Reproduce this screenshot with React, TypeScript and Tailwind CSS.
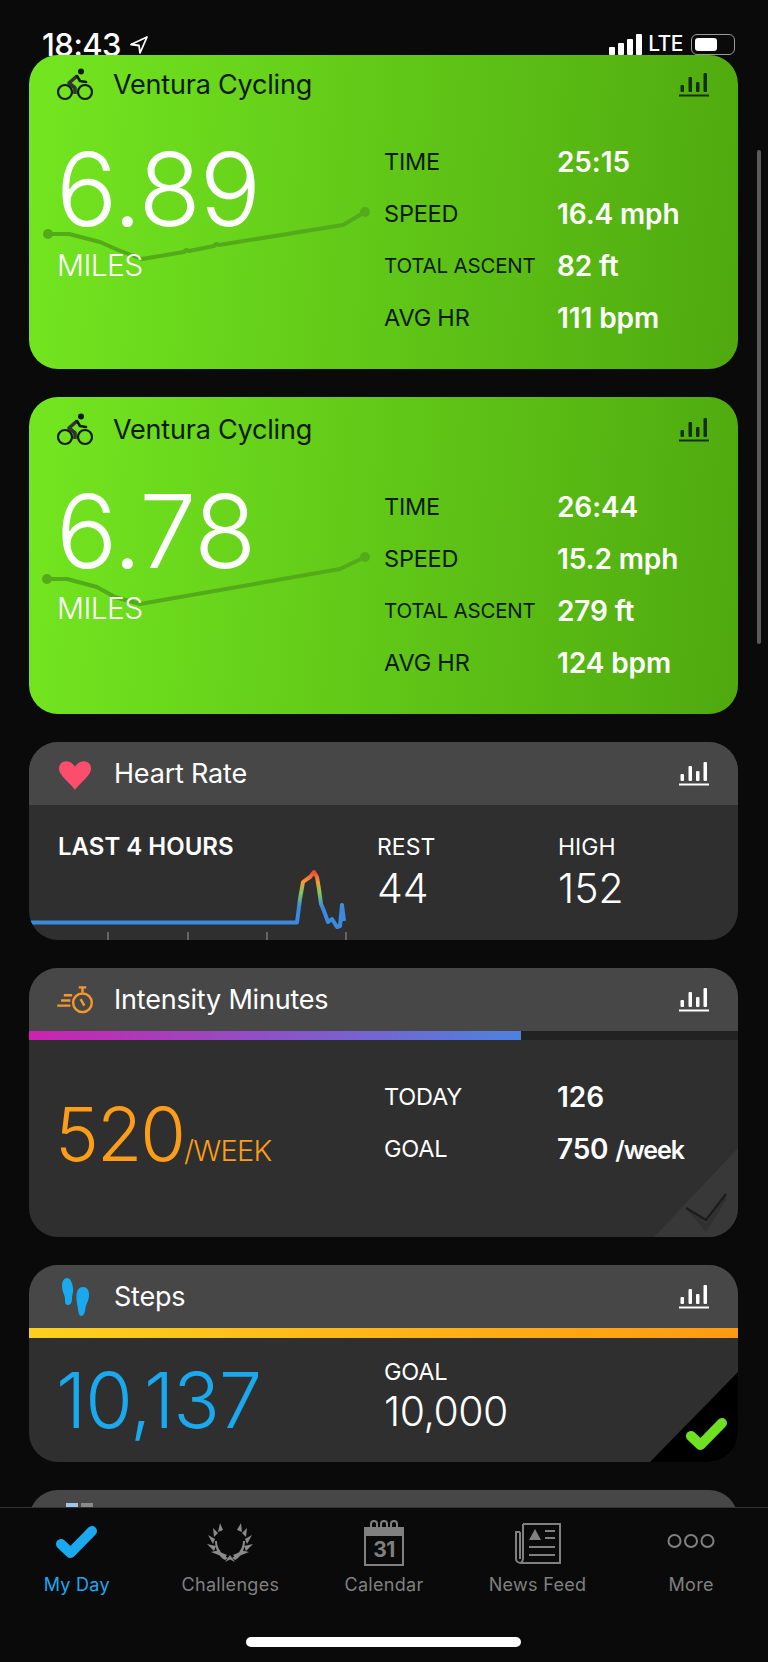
import React from 'react'

// ── Icons ────────────────────────────────────────────────
function ChartIcon({ color = '#fff' }: { color?: string }) {
  return (
    <svg width="30" height="25" viewBox="0 0 30 25" fill={color}>
      <rect x="1.500" y="13" width="3.500" height="7" rx="1" />
      <rect x="9.500" y="5" width="3.500" height="15" rx="1" />
      <rect x="17" y="10" width="3.500" height="10" rx="1" />
      <rect x="24.500" y="1" width="3.500" height="19" rx="1" />
      <rect x="0" y="22.500" width="30" height="2" />
    </svg>
  )
}

function BikeIcon() {
  return (
    <svg width="38" height="33" viewBox="0 0 38 33" fill="none">
      <circle cx="9" cy="24" r="7" stroke="#0c1a05" strokeWidth="2.200" />
      <circle cx="29" cy="24" r="7" stroke="#0c1a05" strokeWidth="2.200" />
      <circle cx="25" cy="3.500" r="3" fill="#0c1a05" />
      <path d="M21 8 L13 15 L19 20 L19 26" stroke="#333" strokeWidth="3.600" strokeLinejoin="round" fill="none" />
      <path d="M21 8 L24 13 L30 14" stroke="#0c1a05" strokeWidth="2.600" strokeLinecap="round" strokeLinejoin="round" fill="none" />
    </svg>
  )
}

function HeartIcon() {
  return (
    <svg width="34" height="29" viewBox="0 0 36 30" fill="#fd4d6d" className="translate-y-[2px]">
      <path d="M18 30 C12 22 1 15 1 7.500 C1 3 4.500 0 8.500 0 C12.500 0 16 2 18 6 C20 2 23.500 0 27.500 0 C31.500 0 35 3 35 7.500 C35 15 24 22 18 30 Z" />
    </svg>
  )
}

function StopwatchIcon() {
  return (
    <svg width="38" height="28" viewBox="0 0 40 30" fill="none" stroke="#f4992a" strokeWidth="2.600">
      <circle cx="28" cy="18" r="10" />
      <path d="M24 1.500 H32 M28 1.500 V7 M26 14 L30 21" />
      <path d="M8 10 H17 M5 15.500 H15 M1 21 H15" />
    </svg>
  )
}

function StepsIcon() {
  return (
    <svg width="30" height="38" viewBox="0 0 30 38" fill="#1aa9ee">
      <path d="M7 0 C10.500 0 12.500 5 13 10 C13.500 15 12 17 12 20 C12 25 10.500 27 8 27 C5 27 5 24 5 21 C5 17 2 14 2 8 C2 3 4 0 7 0 Z" />
      <path d="M23 9 C27 9 29 12 29 17 C29 23 26 26 25.500 30 C25 35 23.500 38 21.500 38 C19 38 18.500 35 18 31 C17.500 27 16 23 16.500 17 C17 12 19 9 23 9 Z" />
    </svg>
  )
}

function CheckIcon({ color }: { color: string }) {
  return (
    <svg width="43" height="34" viewBox="0 0 43 34" fill="none">
      <path d="M6 19 L15.500 28 L37 6" stroke={color} strokeWidth="10" strokeLinecap="round" strokeLinejoin="round" />
    </svg>
  )
}

function LaurelIcon() {
  return (
    <svg width="48" height="40" viewBox="0 0 48 40" fill="#8a8a8a">
      <path d="M14 1 L17 8 L12 10 Z M35 1 L31 8 L36 10 Z" />
      <path d="M7 6 L12 11 L8 15 Z M41 6 L36 11 L40 15 Z" />
      <path d="M2 13 L9 17 L7 22 Z M46 13 L39 17 L41 22 Z" />
      <path d="M1 22 L10 24 L8 29 Z M47 22 L38 24 L40 29 Z" />
      <path d="M5 30 L14 28 L15 34 Z M43 30 L34 28 L33 34 Z" />
      <path d="M11 19 C11 27 16 33 22 36 L19 38 C13 35 9 27 9 19 Z M37 19 C37 27 32 33 26 36 L29 38 C35 35 39 27 39 19 Z" />
      <path d="M24 33 L29 40 L24 37.500 L19 40 Z" />
      <path d="M14 30 L21 33 L18 37 Z M34 30 L27 33 L30 37 Z" />
    </svg>
  )
}

function CalendarIcon() {
  return (
    <svg width="40" height="46" viewBox="0 0 40 46" fill="none">
      <rect x="1" y="8" width="38" height="37" stroke="#808080" strokeWidth="2" />
      <rect x="1" y="9" width="38" height="7" fill="#808080" />
      <path d="M7 10 V4 A3 3 0 0 1 13 4 V10 M17 10 V4 A3 3 0 0 1 23 4 V10 M27 10 V4 A3 3 0 0 1 33 4 V10" stroke="#808080" strokeWidth="2" />
    </svg>
  )
}

function NewsIcon() {
  return (
    <svg width="46" height="41" viewBox="0 0 46 41" fill="none" stroke="#808080" strokeWidth="2">
      <path d="M8 1 H45 V40 H6 C3 40 1 38 1 36 V9 H5" />
      <path d="M5 9 V36 M8 1 V36 C8 38 7 39 6 40" />
      <path d="M20 6 L26 17 H14 Z" fill="#808080" stroke="none" />
      <path d="M30 8 H40 M30 15 H40 M14 24 H40 M14 32 H40" />
    </svg>
  )
}

function MoreIcon() {
  return (
    <svg width="48" height="14" viewBox="0 0 48 14" fill="none" stroke="#808080" strokeWidth="2">
      <circle cx="7.500" cy="7" r="6" />
      <circle cx="24" cy="7" r="6" />
      <circle cx="40.500" cy="7" r="6" />
    </svg>
  )
}

// ── Shared bits ──────────────────────────────────────────
function ActivityCard({
  distance,
  stats,
  route,
  dots,
  heightClass,
  headerClass,
  bodyClass,
  milesClass,
  statsClass,
}: {
  distance: string
  stats: [string, string][]
  route: string
  dots: [number, number][]
  heightClass: string
  headerClass: string
  bodyClass: string
  milesClass: string
  statsClass: string
}) {
  return (
    <div className={`relative overflow-hidden rounded-[29px] bg-[linear-gradient(95deg,#73e620,#4fa90f)] ${heightClass}`}>
      <svg className="pointer-events-none absolute left-0 top-0" width="709" height="317" fill="none">
        <path d={route} stroke="#53ab19" strokeWidth="4" strokeLinejoin="round" strokeLinecap="round" />
        {dots.map(([x, y]) => (
          <circle key={x} cx={x} cy={y} r="5" fill="#53ab19" />
        ))}
      </svg>
      <div className={`relative flex items-center justify-between pl-[27px] pr-[29px] ${headerClass}`}>
        <div className="flex items-center gap-[19px]">
          <BikeIcon />
          <span className="text-[27px] leading-none tracking-[-0.2px] text-[#0c1a05]">Ventura Cycling</span>
        </div>
        <ChartIcon color="#14300a" />
      </div>
      <div className={`relative flex ${bodyClass}`}>
        <div className="w-[355px] pl-[27px] text-white">
          <div className="text-[102px] font-light leading-[116px] tracking-[-1px]">{distance}</div>
          <div className={`pl-[1px] text-[30px] font-light leading-[34px] tracking-[-0.6px] ${milesClass}`}>MILES</div>
        </div>
        <div className={`flex flex-col ${statsClass}`}>
          {stats.map(([label, value]) => (
            <div key={label} className="flex h-[52px] items-center">
              <span className={`w-[173px] tracking-[-0.2px] text-[#0c1a05] ${label === 'TOTAL ASCENT' ? 'text-[20.500px]' : 'text-[23.500px]'}`}>
                {label}
              </span>
              <span className="text-[28px] font-semibold tracking-[-0.1px] text-white">{value}</span>
            </div>
          ))}
        </div>
      </div>
    </div>
  )
}

function CardHeader({ icon, title }: { icon: React.ReactNode; title: string }) {
  return (
    <div className="flex h-[63px] items-center justify-between bg-[#474747] pr-[29px]">
      <div className="flex items-center">
        <div className="flex w-[85px] justify-center pl-[7px]">{icon}</div>
        <span className="text-[27px] leading-none tracking-[-0.2px] text-white">{title}</span>
      </div>
      <ChartIcon />
    </div>
  )
}

function Tab({ icon, label, iconClass, active }: { icon: React.ReactNode; label: string; iconClass: string; active?: boolean }) {
  return (
    <div className="flex w-[153.600px] flex-col items-center">
      <div className={`flex h-[50px] items-end justify-center ${iconClass}`}>{icon}</div>
      <span className={`mt-[8px] text-[18px] leading-[22px] tracking-[0.3px] ${active ? 'text-[#1aa9ee]' : 'text-[#808080]'}`}>
        {label}
      </span>
    </div>
  )
}

export default function App() {
  return (
    <div className="relative flex h-[1662px] w-[768px] flex-col overflow-hidden bg-[#0a0a0b] font-[Inter,sans-serif]">
      <div className="min-h-0 flex-1 overflow-hidden">
        {/* Статус-бар */}
        <div className="flex h-[55px] items-end justify-between pl-[42px] pr-[33px]">
          <div className="flex translate-y-[5px] items-center gap-[8px] text-white">
            <span className="text-[31px] font-medium leading-[30px] tracking-[-0.5px]">18:43</span>
            <svg width="20" height="20" viewBox="0 0 20 20" fill="none" stroke="#fff" strokeWidth="1.800" strokeLinejoin="round">
              <path d="M18 2 L2 9.500 L10 10.500 L11 18 Z" />
            </svg>
          </div>
          <div className="flex items-end gap-[6px]">
            <div className="flex items-end gap-[3px]">
              <div className="h-[8px] w-[6px] rounded-[1px] bg-white" />
              <div className="h-[12px] w-[6px] rounded-[1px] bg-white" />
              <div className="h-[16px] w-[6px] rounded-[1px] bg-white" />
              <div className="h-[21px] w-[6px] rounded-[1px] bg-white" />
            </div>
            <span className="text-[21px] font-medium leading-[23px] tracking-[-0.5px] text-white">LTE</span>
            <div className="ml-[2px] flex h-[21px] w-[44px] items-center rounded-[6px] border border-[#9a9a9a] p-[3px]">
              <div className="h-full w-[22px] rounded-[3px] bg-white" />
            </div>
          </div>
        </div>

        <div className="flex flex-col gap-[28px] pl-[29px] pr-[30px]">
          <ActivityCard
            heightClass="h-[314px]"
            headerClass="h-[59px]"
            bodyClass="pt-[17px]"
            milesClass="mt-[1px]"
            statsClass="pt-[5px]"
            distance="6.89"
            stats={[
              ['TIME', '25:15'],
              ['SPEED', '16.4 mph'],
              ['TOTAL ASCENT', '82 ft'],
              ['AVG HR', '111 bpm'],
            ]}
            route="M19 179 L40 179 L71 187 L89 195 L113 204 L155 197 L157 195 L160 196 L185 191 L187 189 L190 190 L314 170 L336 157"
            dots={[[19, 179], [336, 157]]}
          />
          <ActivityCard
            heightClass="h-[317px]"
            headerClass="h-[64px]"
            bodyClass="pt-[12px]"
            milesClass="mt-[2px]"
            statsClass="pt-[8px]"
            distance="6.78"
            stats={[
              ['TIME', '26:44'],
              ['SPEED', '15.2 mph'],
              ['TOTAL ASCENT', '279 ft'],
              ['AVG HR', '124 bpm'],
            ]}
            route="M18 182 L38 182 L68 190 L86 200 L111 207 L311 172 L336 160"
            dots={[[18, 182], [336, 160]]}
          />

          {/* Heart Rate */}
          <div className="relative h-[198px] overflow-hidden rounded-[29px] bg-[#2f2f2f]">
            <CardHeader icon={<HeartIcon />} title="Heart Rate" />
            <div className="flex pt-[24px]">
              <div className="w-[348px] pl-[29px] text-[24px] font-semibold leading-[36px] text-white">LAST 4 HOURS</div>
              <div className="w-[181px]">
                <div className="text-[23px] leading-[36px] text-white">REST</div>
                <div className="text-[41px] font-light leading-[46px] text-white">44</div>
              </div>
              <div>
                <div className="text-[23px] leading-[36px] text-white">HIGH</div>
                <div className="text-[41px] font-light leading-[46px] text-white">152</div>
              </div>
            </div>
            <svg className="absolute left-0 top-0" width="709" height="198" fill="none">
              <defs>
                <linearGradient id="hr" gradientUnits="userSpaceOnUse" x1="0" y1="130" x2="0" y2="180">
                  <stop offset="0" stopColor="#ef4a35" />
                  <stop offset="0.2" stopColor="#f59a35" />
                  <stop offset="0.42" stopColor="#7fc95a" />
                  <stop offset="0.7" stopColor="#3a8ade" />
                  <stop offset="1" stopColor="#3a8ade" />
                </linearGradient>
              </defs>
              <path
                d="M0 180.500 L268 180.500 L271 157 L274 140 L278 137 L281 135 L285 130 L288 135 L290 147 L292 162 L295 169 L299 180 L303 177 L308 185 L311 184 L313 163 L315 179"
                stroke="url(#hr)"
                strokeWidth="4"
                strokeLinejoin="round"
              />
              <path d="M79 190 V198 M159 190 V198 M238 190 V198 M317 190 V198" stroke="#777" strokeWidth="1.500" />
            </svg>
          </div>

          {/* Intensity Minutes */}
          <div className="relative h-[269px] overflow-hidden rounded-[29px] bg-[#2f2f2f]">
            <CardHeader icon={<StopwatchIcon />} title="Intensity Minutes" />
            <div className="h-[9px] bg-[#222]">
              <div className="h-full w-[69.400%] bg-[linear-gradient(90deg,#cc22b0,#4d82e0)]" />
            </div>
            <div className="flex h-[197px] items-center">
              <div className="flex w-[355px] items-baseline pb-[10px] pl-[26px] text-[#fb9d18]">
                <span className="text-[74px] font-light leading-none tracking-[-2px]">520</span>
                <span className="text-[29px] font-light leading-none tracking-[-0.8px]">/WEEK</span>
              </div>
              <div className="flex flex-col pb-[32px]">
                <div className="flex h-[52px] items-center">
                  <span className="w-[173px] text-[23.500px] tracking-[-0.2px] text-white">TODAY</span>
                  <span className="text-[28px] font-semibold text-white">126</span>
                </div>
                <div className="flex h-[52px] items-center">
                  <span className="w-[173px] text-[23.500px] tracking-[-0.2px] text-white">GOAL</span>
                  <span className="text-[28px] font-semibold tracking-[-0.2px] text-white">
                    750 <span className="text-[25px] tracking-[-1px]">/week</span>
                  </span>
                </div>
              </div>
            </div>
            <svg className="absolute bottom-0 right-0" width="84" height="89" fill="none">
              <path d="M84 0 V89 H0 Z" fill="#383838" />
              <path d="M32 60 L52 76 L72 48 L72 52 L52 84 Z" fill="#303030" />
              <path d="M32 60 L52 72 L72 46" stroke="#1d1d1d" strokeWidth="2.500" />
            </svg>
          </div>

          {/* Steps */}
          <div className="relative h-[197px] overflow-hidden rounded-[29px] bg-[#2f2f2f]">
            <CardHeader icon={<StepsIcon />} title="Steps" />
            <div className="h-[10px] bg-[linear-gradient(90deg,#fdd01e,#fd9a12)]" />
            <div className="flex h-[124px] items-center">
              <div className="w-[355px] pl-[27px] text-[77px] font-light leading-none tracking-[-1px] text-[#1aa9ee]">10,137</div>
              <div className="pb-[10px] text-white">
                <div className="text-[23.500px] leading-[32px] tracking-[-0.2px]">GOAL</div>
                <div className="text-[41px] font-light leading-[46px] tracking-[-0.5px]">10,000</div>
              </div>
            </div>
            <svg className="absolute bottom-0 right-0" width="88" height="90" fill="none">
              <path d="M88 0 V90 H0 Z" fill="#000" />
            </svg>
            <div className="absolute bottom-[11px] right-[10px]">
              <CheckIcon color="#6fe122" />
            </div>
          </div>

          {/* Следующая карточка, обрезана таббаром */}
          <div className="flex h-[80px] items-start gap-[3px] rounded-t-[29px] bg-[#474747] pl-[37px] pt-[13px]">
            <div className="h-[4px] w-[12px] bg-[#9cc7e6]" />
            <div className="h-[4px] w-[12px] bg-[#8a8a8a]" />
          </div>
        </div>
      </div>

      {/* Таббар */}
      <div className="relative z-10 h-[155px] border-t border-[#333] bg-[#0a0a0b]">
        <div className="flex pt-[8px]">
          <Tab active label="My Day" iconClass="pb-[7px]" icon={<CheckIcon color="#1aa9ee" />} />
          <Tab label="Challenges" iconClass="pb-[4px]" icon={<LaurelIcon />} />
          <Tab
            label="Calendar"
            iconClass=""
            icon={
              <div className="relative">
                <CalendarIcon />
                <span className="absolute left-0 right-0 top-[17px] text-center text-[21px] font-bold leading-[26px] tracking-[-0.5px] text-[#808080]">31</span>
              </div>
            }
          />
          <Tab label="News Feed" iconClass="pb-[2px]" icon={<NewsIcon />} />
          <Tab label="More" iconClass="pb-[18px]" icon={<MoreIcon />} />
        </div>
        <div className="absolute bottom-[15px] left-[246px] h-[10px] w-[275px] rounded-full bg-white" />
      </div>

      {/* Полоса прокрутки */}
      <div className="absolute left-[757px] top-[150px] h-[494px] w-[4px] rounded-full bg-[#5a5a5a]" />
    </div>
  )
}
